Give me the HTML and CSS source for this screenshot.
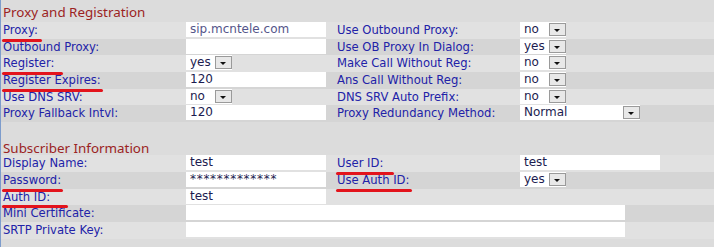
FILE: index.html
```html
<!DOCTYPE html>
<html lang="en">
  <head>
    <meta charset="UTF-8" />
    <title>Ext 1</title>
    <link rel="stylesheet" href="styles.css">
  </head>
  <body>
    <div class="panel">
      <div class="section-title first">Proxy and Registration</div>

      <div class="row">
        <span class="label mark mark-proxy">Proxy:</span>
        <span class="field"><span class="input muted">sip.mcntele.com</span></span>
        <span class="label">Use Outbound Proxy:</span>
        <span class="field"><span class="select">no<i class="arrow"></i></span></span>
      </div>
      <div class="row">
        <span class="label">Outbound Proxy:</span>
        <span class="field"><span class="input"></span></span>
        <span class="label">Use OB Proxy In Dialog:</span>
        <span class="field"><span class="select">yes<i class="arrow"></i></span></span>
      </div>
      <div class="row">
        <span class="label mark mark-register">Register:</span>
        <span class="field"><span class="select">yes<i class="arrow"></i></span></span>
        <span class="label">Make Call Without Reg:</span>
        <span class="field"><span class="select">no<i class="arrow"></i></span></span>
      </div>
      <div class="row">
        <span class="label mark mark-expires">Register Expires:</span>
        <span class="field"><span class="input">120</span></span>
        <span class="label">Ans Call Without Reg:</span>
        <span class="field"><span class="select">no<i class="arrow"></i></span></span>
      </div>
      <div class="row">
        <span class="label">Use DNS SRV:</span>
        <span class="field"><span class="select">no<i class="arrow"></i></span></span>
        <span class="label">DNS SRV Auto Prefix:</span>
        <span class="field"><span class="select">no<i class="arrow"></i></span></span>
      </div>
      <div class="row">
        <span class="label">Proxy Fallback Intvl:</span>
        <span class="field"><span class="input">120</span></span>
        <span class="label">Proxy Redundancy Method:</span>
        <span class="field"><span class="select wide">Normal<i class="arrow"></i></span></span>
      </div>
      <div class="row blank"></div>

      <div class="section-title">Subscriber Information</div>

      <div class="row">
        <span class="label">Display Name:</span>
        <span class="field"><span class="input">test</span></span>
        <span class="label mark mark-userid">User ID:</span>
        <span class="field"><span class="input">test</span></span>
      </div>
      <div class="row">
        <span class="label mark mark-password">Password:</span>
        <span class="field"><span class="input secret">*************</span></span>
        <span class="label mark mark-authid2">Use Auth ID:</span>
        <span class="field"><span class="select">yes<i class="arrow"></i></span></span>
      </div>
      <div class="row">
        <span class="label mark mark-authid">Auth ID:</span>
        <span class="field"><span class="input">test</span></span>
        <span class="label"></span>
        <span class="field"></span>
      </div>
      <div class="row">
        <span class="label">Mini Certificate:</span>
        <span class="field span"><span class="input long"></span></span>
      </div>
      <div class="row">
        <span class="label">SRTP Private Key:</span>
        <span class="field span"><span class="input long"></span></span>
      </div>
    </div>
  </body>
</html>
```

FILE: styles.css
```css
body {
  margin: 0;
  background-color: #dcdcdc;
  font-family: "DejaVu Sans", Verdana, sans-serif;
  font-size: 11.6px;
}

.panel {
  height: 247px;
  border-left: 1px solid #7d9ccc;
  background-color: #dcdcdc;
  box-sizing: border-box;
}

.section-title {
  height: calc(50px / 3);
  padding-left: 2px;
  color: #9b2323;
  font-family: "Noto Sans", "DejaVu Sans", sans-serif;
  font-size: 13.4px;
  line-height: 18px;
}
.section-title.first {
  height: 22px;
  line-height: 25px;
}

.row {
  display: grid;
  grid-template-columns: 185px 149px 185px 1fr;
  height: calc(50px / 3);
  background-color: #e1e1e1;
}
.row:nth-of-type(odd) {
  background-color: #d5d5d5;
}
.row.blank {
  background-color: #dcdcdc;
}

.label {
  position: relative;
  padding-left: 2px;
  color: #2222a8;
  line-height: 16px;
  white-space: nowrap;
}

.field {
  display: flex;
  align-items: flex-start;
}
.field.span {
  grid-column: 2 / 5;
}

.input {
  display: block;
  width: 136px;
  height: 15px;
  padding-left: 4px;
  background-color: #fff;
  color: #1c1c50;
  font-size: 12px;
  line-height: 15px;
}
.input.muted {
  color: #55558a;
}
.input.secret {
  letter-spacing: 0.7px;
}
.input.long {
  width: 435px;
}

.select {
  display: flex;
  align-items: center;
  justify-content: space-between;
  width: 42px;
  height: 15px;
  padding-left: 4px;
  background-color: #fff;
  color: #1c1c50;
  font-size: 12px;
  line-height: 15px;
}
.select.wide {
  width: 116px;
}
.arrow {
  position: relative;
  width: 15px;
  height: 11px;
  border: 1px solid #9a9a9a;
  background-color: #e8e8e8;
}
.arrow::after {
  content: "";
  position: absolute;
  left: 4px;
  top: 5px;
  border-left: 3.5px solid transparent;
  border-right: 3.5px solid transparent;
  border-top: 3.5px solid #111;
}

/* hand-drawn red marks over the labels */
.mark::after {
  content: "";
  position: absolute;
  left: 1px;
  bottom: -3px;
  height: 3px;
  border-radius: 2px;
  background-color: #e3141c;
}
.mark-proxy::after { width: 40px; }
.mark-register::after { width: 61px; }
.mark-expires::after { width: 101px; }
.mark-password::after { width: 61px; }
.mark-authid::after { width: 66px; }
.mark-userid::after { width: 58px; }
.mark-authid2::after { width: 76px; }
```
